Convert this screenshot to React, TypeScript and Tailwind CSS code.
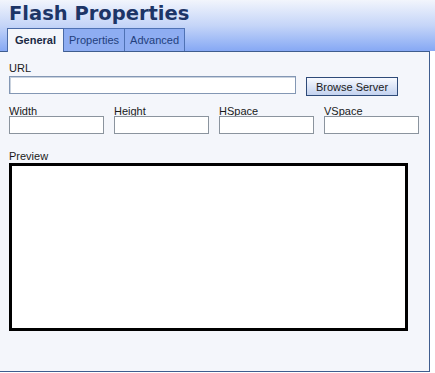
import React from "react";

const font = { fontFamily: '"Liberation Sans", Arial, sans-serif' };

const Field: React.FC<{ label: string }> = ({ label }) => (
  <div className="flex flex-col w-[95px]">
    <span className="text-[11px] leading-[13px] text-[#1a1a1a] h-[13px]">{label}</span>
    <input className="mt-[-2px] h-[18px] w-[95px] border border-[#8b949e] bg-white outline-none" />
  </div>
);

const tabs = ["General", "Properties", "Advanced"];

export default function App() {
  const active = 0;
  return (
    <div className="w-[435px] h-[373px] bg-white overflow-hidden" style={font}>
      <div className="h-[51px] bg-gradient-to-b from-[#f2f5fc] via-[#c5d5f8] to-[#86a8f4] flex flex-col">
        <h1
          className="pl-[9px] h-[28px] pt-[1px] text-[19.5px] leading-[25px] font-bold text-[#1d3567]"
          style={{ fontFamily: '"DejaVu Sans", Verdana, sans-serif' }}
        >
          Flash Properties
        </h1>
        <div className="flex pl-[7px] h-[23px] items-end">
          {tabs.map((t, i) => (
            <div
              key={t}
              className={
                i === active
                  ? "relative z-10 h-[24px] mb-[-1px] px-[7px] flex items-center border border-b-0 border-[#4a6aa6] bg-[#f4f6fb] text-[11px] font-bold text-[#1a2a44]"
                  : "h-[23px] px-[5px] flex items-center border border-b-0 border-l-0 border-[#4f72b4] bg-[#8eadf2] text-[11px] text-[#233f7c]"
              }
            >
              {t}
            </div>
          ))}
        </div>
      </div>
      <div className="w-[430px] h-[321px] border-t border-r border-b border-[#3f5d8e] bg-[#f4f6fb] pl-[9px]">
        <div className="pt-[10px] text-[11px] leading-[13px] text-[#1a1a1a]">URL</div>
        <div className="flex items-start mt-[1px]">
          <input className="h-[18px] w-[287px] border border-[#8397b4] bg-white shadow-[inset_1px_1px_0_#c9d2de] outline-none" />
          <button className="ml-[10px] mt-[1px] h-[19px] w-[92px] border border-[#2e4a78] bg-gradient-to-b from-[#f8faff] to-[#c3d2ef] text-[11px] leading-[16px] text-[#1a1a1a]">
            Browse Server
          </button>
        </div>
        <div className="flex gap-[10px] mt-[9px]">
          <Field label="Width" />
          <Field label="Height" />
          <Field label="HSpace" />
          <Field label="VSpace" />
        </div>
        <div className="mt-[16px] text-[11px] leading-[13px] text-[#1a1a1a]">Preview</div>
        <div className="w-[399px] h-[168px] border-[3px] border-black bg-white" />
      </div>
    </div>
  );
}
